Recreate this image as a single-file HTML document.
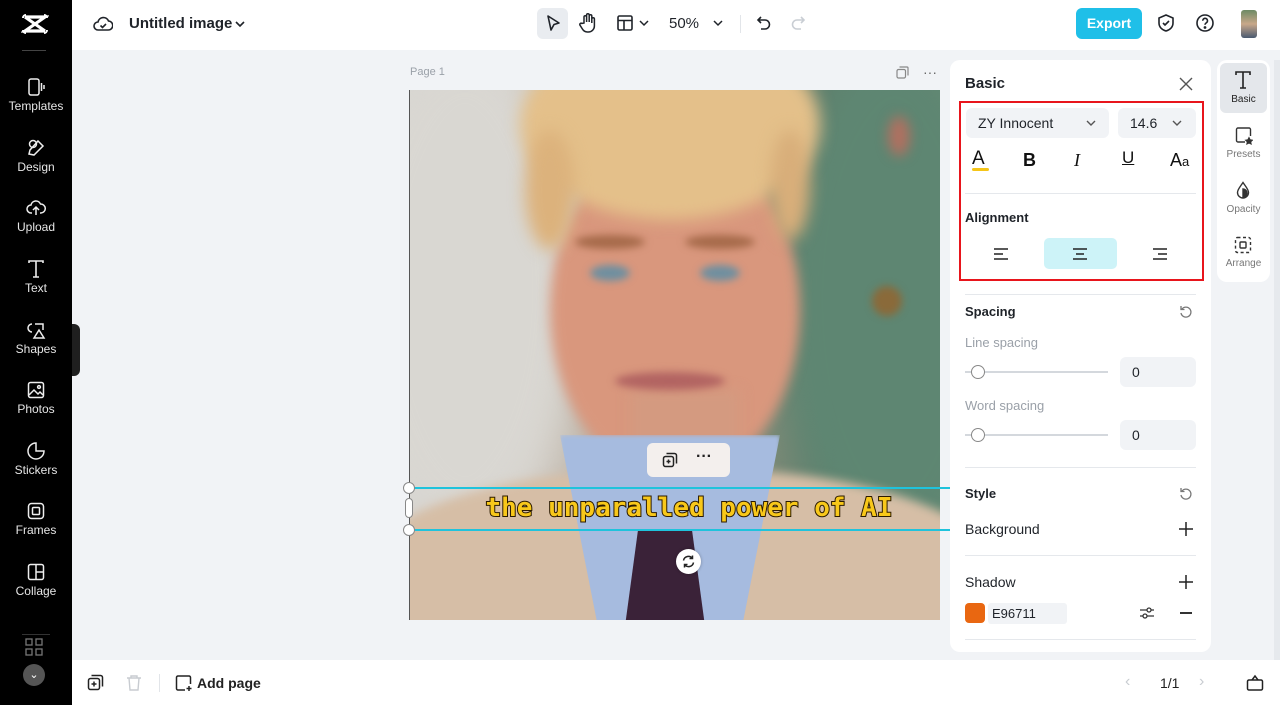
<!DOCTYPE html>
<html><head><meta charset="utf-8"><style>
*{box-sizing:border-box;margin:0;padding:0}
body{width:1280px;height:705px;overflow:hidden;font-family:"Liberation Sans",sans-serif;background:#f1f3f6;position:relative;color:#1f2329}
.abs{position:absolute}
#side{left:0;top:0;width:72px;height:705px;background:#000;color:#ddd}
.si{position:absolute;left:0;width:72px;text-align:center;font-size:12px;color:#e6e6e6}
.si svg{display:block;margin:0 auto 2px}
#top{left:72px;top:0;width:1208px;height:50px;background:#fff}
#bot{left:72px;top:660px;width:1208px;height:45px;background:#fff}
.panel{background:#fff;border-radius:10px}
.lbl{font-size:14px;font-weight:bold;color:#1f2329}
.gray{font-size:13px;color:#9aa0a8}
.inp{background:#f1f3f6;border-radius:6px;font-size:14px;color:#1f2329}
.hr{height:1px;background:#e5e8ec}
.blob{position:absolute;border-radius:50%}
</style></head><body>
<div id="side" class="abs">
 <svg class="abs" style="left:21px;top:13px" width="28" height="22" viewBox="0 0 28 22"><path d="M4 4h20L4 18h20" stroke="#fff" stroke-width="3.2" fill="none"/><path d="M4 4l20 14" stroke="#fff" stroke-width="3.2"/><path d="M2 5a3 3 0 013-3M26 5a3 3 0 00-3-3M2 17a3 3 0 003 3M26 17a3 3 0 01-3 3" stroke="#fff" stroke-width="2" fill="none"/></svg>
 <div class="abs" style="left:22px;top:50px;width:24px;height:1px;background:#444"></div>
 <div class="si" style="top:77px"><svg width="20" height="20" viewBox="0 0 20 20" fill="none" stroke="#eee" stroke-width="1.5"><rect x="3" y="2" width="10" height="16" rx="2"/><path d="M15.5 6v8M18 8v4"/></svg>Templates</div>
 <div class="si" style="top:138px"><svg width="20" height="20" viewBox="0 0 20 20" fill="none" stroke="#eee" stroke-width="1.5"><circle cx="7" cy="6" r="3.5"/><path d="M12 3l5 5-9 9-5-1 1-4z"/></svg>Design</div>
 <div class="si" style="top:198px"><svg width="20" height="20" viewBox="0 0 20 20" fill="none" stroke="#eee" stroke-width="1.5"><path d="M6 15H5a4 4 0 010-8 5 5 0 019.5-1A4 4 0 0115 15h-1M10 17V9M7 12l3-3 3 3"/></svg>Upload</div>
 <div class="si" style="top:259px"><svg width="20" height="20" viewBox="0 0 20 20" fill="none" stroke="#eee" stroke-width="1.6"><path d="M3 4V2h14v2M10 2v16M7 18h6"/></svg>Text</div>
 <div class="si" style="top:320px"><svg width="20" height="20" viewBox="0 0 20 20" fill="none" stroke="#eee" stroke-width="1.5"><path d="M6 12a4 4 0 110-8M9 4h8v6M8 18l5-8 5 8z"/></svg>Shapes</div>
 <div class="si" style="top:380px"><svg width="20" height="20" viewBox="0 0 20 20" fill="none" stroke="#eee" stroke-width="1.5"><rect x="2.5" y="2.5" width="15" height="15" rx="2"/><path d="M3 15l5-5 4 4 2-2 3 3"/><circle cx="13" cy="7" r="1.4"/></svg>Photos</div>
 <div class="si" style="top:441px"><svg width="20" height="20" viewBox="0 0 20 20" fill="none" stroke="#eee" stroke-width="1.5"><path d="M10 2a8 8 0 108 8h-8z"/></svg>Stickers</div>
 <div class="si" style="top:501px"><svg width="20" height="20" viewBox="0 0 20 20" fill="none" stroke="#eee" stroke-width="1.5"><rect x="2.5" y="2.5" width="15" height="15" rx="3"/><rect x="6.5" y="6.5" width="7" height="7" rx="1"/></svg>Frames</div>
 <div class="si" style="top:562px"><svg width="20" height="20" viewBox="0 0 20 20" fill="none" stroke="#eee" stroke-width="1.5"><rect x="2.5" y="2.5" width="15" height="15" rx="2"/><path d="M10 2.5v15M10 10h7.5"/></svg>Collage</div>
 <div class="abs" style="left:22px;top:634px;width:28px;height:1px;background:#333"></div>
 <svg class="abs" style="left:25px;top:638px" width="18" height="18" viewBox="0 0 18 18" fill="none" stroke="#777" stroke-width="1.3"><rect x="1" y="1" width="6" height="6"/><rect x="11" y="1" width="6" height="6"/><rect x="1" y="11" width="6" height="6"/><rect x="11" y="11" width="6" height="6"/></svg>
 <div class="abs" style="left:23px;top:664px;width:22px;height:22px;border-radius:50%;background:#555;color:#fff;font-size:11px;text-align:center;line-height:22px">⌄</div>
</div>
<div class="abs" style="left:72px;top:324px;width:8px;height:52px;background:#1f1f1f;border-radius:0 6px 6px 0"></div>

<div id="top" class="abs">
 <svg class="abs" style="left:21px;top:14px" width="20" height="20" viewBox="0 0 20 20" fill="none" stroke="#1f2329" stroke-width="1.6"><path d="M5 16a4 4 0 010-8 5.5 5.5 0 0110.5-1A4.5 4.5 0 0115 16z"/><path d="M7.5 11.5l2 2 3.5-3.5"/></svg>
 <div class="abs" style="left:57px;top:15px;font-size:15px;font-weight:bold;color:#1f2329">Untitled image</div>
 <svg class="abs" style="left:162px;top:18px" width="12" height="12" viewBox="0 0 12 12"><path d="M2 4l4 4 4-4" stroke="#1f2329" stroke-width="1.6" fill="none"/></svg>
 <div class="abs" style="left:465px;top:8px;width:31px;height:31px;background:#e9ecf0;border-radius:6px"></div>
 <svg class="abs" style="left:471px;top:13px" width="20" height="20" viewBox="0 0 20 20"><path d="M5 3l11 7-5 1.5L8 17z" stroke="#1f2329" stroke-width="1.6" fill="none" stroke-linejoin="round"/></svg>
 <svg class="abs" style="left:506px;top:12px" width="20" height="22" viewBox="0 0 20 22" fill="none" stroke="#1f2329" stroke-width="1.5"><path d="M6 11V5a1.3 1.3 0 012.6 0v5V3a1.3 1.3 0 012.6 0v7V4a1.3 1.3 0 012.6 0v7V7a1.3 1.3 0 012.6 0v7a6 6 0 01-6 6h-1a6 6 0 01-5-3l-2.5-4a1.3 1.3 0 012-1.5z"/></svg>
 <svg class="abs" style="left:544px;top:14px" width="18" height="18" viewBox="0 0 18 18" fill="none" stroke="#1f2329" stroke-width="1.6"><rect x="2" y="2" width="14" height="14" rx="1.5"/><path d="M2 6.5h14M8 6.5V16"/></svg>
 <svg class="abs" style="left:566px;top:18px" width="12" height="10" viewBox="0 0 12 10"><path d="M2 3l4 4 4-4" stroke="#1f2329" stroke-width="1.5" fill="none"/></svg>
 <div class="abs" style="left:597px;top:15px;font-size:15px;color:#1f2329">50%</div>
 <svg class="abs" style="left:640px;top:18px" width="12" height="10" viewBox="0 0 12 10"><path d="M2 3l4 4 4-4" stroke="#1f2329" stroke-width="1.5" fill="none"/></svg>
 <div class="abs" style="left:668px;top:15px;width:1px;height:18px;background:#e2e5e9"></div>
 <svg class="abs" style="left:683px;top:14px" width="18" height="18" viewBox="0 0 18 18" fill="none" stroke="#1f2329" stroke-width="1.6"><path d="M6 3L3 6l3 3M3 6h7a4.5 4.5 0 010 9H6"/></svg>
 <svg class="abs" style="left:717px;top:14px" width="18" height="18" viewBox="0 0 18 18" fill="none" stroke="#c9ced4" stroke-width="1.6"><path d="M12 3l3 3-3 3M15 6H8a4.5 4.5 0 000 9h4"/></svg>
 <div class="abs" style="left:1004px;top:8px;width:66px;height:31px;background:#1fbfe8;border-radius:6px;color:#fff;font-weight:bold;font-size:14px;text-align:center;line-height:31px">Export</div>
 <svg class="abs" style="left:1084px;top:13px" width="20" height="20" viewBox="0 0 20 20" fill="none" stroke="#1f2329" stroke-width="1.6"><path d="M10 2l7 3v5c0 4-3 7-7 8-4-1-7-4-7-8V5z"/><path d="M7 10l2 2 4-4"/></svg>
 <svg class="abs" style="left:1123px;top:13px" width="20" height="20" viewBox="0 0 20 20" fill="none" stroke="#1f2329" stroke-width="1.6"><circle cx="10" cy="10" r="8"/><path d="M7.7 7.7a2.4 2.4 0 114 1.8c-1 .7-1.7 1.2-1.7 2.3"/><circle cx="10" cy="14.5" r=".6" fill="#1f2329"/></svg>
 <div class="abs" style="left:1169px;top:10px;width:16px;height:28px;border-radius:3px;background:linear-gradient(#6d8a64,#c9a88a 50%,#4a5a70)"></div>
</div>

<div class="abs" style="left:410px;top:66px;font-size:11px;color:#9aa0a8">Page 1</div>
<svg class="abs" style="left:896px;top:66px" width="13" height="13" viewBox="0 0 13 13" fill="none" stroke="#888" stroke-width="1.2"><rect x="1" y="3.5" width="8.5" height="8.5" rx="1.5"/><path d="M3.5 1h7.5a1 1 0 011 1v7.5"/></svg>
<div class="abs" style="left:923px;top:64px;font-size:14px;color:#666">···</div>

<!-- photo -->
<div class="abs" style="left:410px;top:90px;width:530px;height:530px;overflow:hidden;background:linear-gradient(90deg,#d8d6d2 0%,#cfc9c1 22%,#a79a88 50%,#5f7f6c 80%,#6b8d77 100%)">
 <div class="blob" style="left:-60px;top:-40px;width:230px;height:480px;background:#d9d7d2;filter:blur(20px)"></div>
 <div class="blob" style="left:370px;top:-40px;width:230px;height:500px;background:#5e8672;filter:blur(18px)"></div>
 <div class="blob" style="left:462px;top:196px;width:30px;height:30px;background:#8a6a3a;filter:blur(4px)"></div>
 <div class="blob" style="left:478px;top:26px;width:22px;height:40px;background:#b07060;filter:blur(6px)"></div>
 <div class="blob" style="left:140px;top:50px;width:250px;height:340px;background:#d9977d;filter:blur(6px)"></div>
 <div class="abs" style="left:220px;top:300px;width:110px;height:90px;background:#d49a80;filter:blur(6px)"></div>
 <div class="blob" style="left:110px;top:-60px;width:300px;height:190px;background:#e4c08a;filter:blur(8px)"></div>
 <div class="blob" style="left:115px;top:40px;width:50px;height:120px;background:#dcb27c;filter:blur(8px)"></div>
 <div class="blob" style="left:360px;top:40px;width:40px;height:110px;background:#d8ae7a;filter:blur(8px)"></div>
 <div class="blob" style="left:165px;top:145px;width:70px;height:14px;background:#a66a4a;filter:blur(4px)"></div>
 <div class="blob" style="left:275px;top:145px;width:70px;height:14px;background:#a66a4a;filter:blur(4px)"></div>
 <div class="blob" style="left:180px;top:175px;width:40px;height:16px;background:#6e8fa0;filter:blur(4px)"></div>
 <div class="blob" style="left:290px;top:175px;width:40px;height:16px;background:#6e8fa0;filter:blur(4px)"></div>
 <div class="blob" style="left:205px;top:282px;width:110px;height:18px;background:#b26462;filter:blur(4px)"></div>
 <div class="abs" style="left:-60px;top:380px;width:660px;height:260px;background:#d6bea6;border-radius:45% 45% 0 0;filter:blur(5px)"></div>
 <div class="abs" style="left:150px;top:345px;width:220px;height:200px;background:#a6bbdf;clip-path:polygon(0 0,100% 0,82% 100%,18% 100%);filter:blur(2px)"></div>
 <div class="abs" style="left:210px;top:440px;width:90px;height:100px;background:#3a2238;clip-path:polygon(20% 0,80% 0,95% 100%,5% 100%)"></div>
</div>
<div class="abs" style="left:409px;top:90px;width:1px;height:530px;background:#555"></div>
<!-- selection -->
<div class="abs" style="left:410px;top:487px;width:540px;height:2px;background:#1fc3dc"></div>
<div class="abs" style="left:410px;top:529px;width:540px;height:2px;background:#1fc3dc"></div>
<div class="abs" style="left:403px;top:482px;width:12px;height:12px;border-radius:50%;background:#fff;border:1px solid #888"></div>
<div class="abs" style="left:403px;top:524px;width:12px;height:12px;border-radius:50%;background:#fff;border:1px solid #888"></div>
<div class="abs" style="left:405px;top:498px;width:8px;height:20px;border-radius:4px;background:#fff;border:1px solid #888"></div>
<div class="abs" style="left:410px;top:490px;width:558px;text-align:center;font-family:'DejaVu Sans Mono',monospace;font-weight:bold;font-size:26px;letter-spacing:0px;color:#f8c81a;-webkit-text-stroke:2px #2a1a00;paint-order:stroke fill;line-height:36px">the unparalled power of AI</div>
<div class="abs" style="left:647px;top:443px;width:83px;height:34px;background:#f3efed;border-radius:6px"></div>
<svg class="abs" style="left:662px;top:452px" width="16" height="16" viewBox="0 0 16 16" fill="none" stroke="#222" stroke-width="1.5"><rect x="1.5" y="4.5" width="10" height="10" rx="2"/><path d="M4.5 1.5h8a2 2 0 012 2v8M6.5 7.5v4M4.5 9.5h4"/></svg>
<div class="abs" style="left:696px;top:448px;font-size:16px;font-weight:bold;color:#222">···</div>
<div class="abs" style="left:676px;top:549px;width:25px;height:25px;border-radius:50%;background:#fff;box-shadow:0 0 3px rgba(0,0,0,.3)"></div>
<svg class="abs" style="left:681px;top:554px" width="15" height="15" viewBox="0 0 15 15" fill="none" stroke="#222" stroke-width="1.5"><path d="M2.5 6.5a5 5 0 019-2M12.5 8.5a5 5 0 01-9 2M11.5 1.5v3h-3M3.5 13.5v-3h3"/></svg>

<!-- panel -->
<div class="abs panel" style="left:950px;top:60px;width:261px;height:592px;overflow:hidden">
 <div class="abs lbl" style="left:15px;top:15px;font-size:15px">Basic</div>
 <svg class="abs" style="left:229px;top:17px" width="14" height="14" viewBox="0 0 14 14"><path d="M1 1l12 12M13 1L1 13" stroke="#555" stroke-width="1.4"/></svg>
 <div class="abs" style="left:9px;top:41px;width:245px;height:180px;border:2px solid #e8151c"></div>
 <div class="abs inp" style="left:16px;top:48px;width:143px;height:30px;line-height:30px;padding-left:12px">ZY Innocent</div>
 <svg class="abs" style="left:135px;top:58px" width="12" height="10" viewBox="0 0 12 10"><path d="M2 3l4 4 4-4" stroke="#555" stroke-width="1.4" fill="none"/></svg>
 <div class="abs inp" style="left:168px;top:48px;width:78px;height:30px;line-height:30px;padding-left:12px">14.6</div>
 <svg class="abs" style="left:221px;top:58px" width="12" height="10" viewBox="0 0 12 10"><path d="M2 3l4 4 4-4" stroke="#555" stroke-width="1.4" fill="none"/></svg>
 <div class="abs" style="left:22px;top:88px;font-size:19px;color:#111">A</div>
 <div class="abs" style="left:22px;top:108px;width:17px;height:3px;background:#f5c518;border-radius:2px"></div>
 <div class="abs" style="left:73px;top:90px;font-size:18px;font-weight:bold;color:#111">B</div>
 <div class="abs" style="left:124px;top:90px;font-size:18px;font-style:italic;font-family:'Liberation Serif',serif;color:#111">I</div>
 <div class="abs" style="left:172px;top:88px;font-size:17px;text-decoration:underline;color:#111">U</div>
 <div class="abs" style="left:220px;top:90px;font-size:18px;color:#111">A<span style="font-size:13px">a</span></div>
 <div class="abs hr" style="left:15px;top:133px;width:231px"></div>
 <div class="abs" style="left:15px;top:150px;font-size:13px;font-weight:bold;color:#1f2329">Alignment</div>
 <div class="abs" style="left:94px;top:178px;width:73px;height:31px;background:#cdf3f8;border-radius:5px"></div>
 <svg class="abs" style="left:43px;top:187px" width="16" height="14" viewBox="0 0 16 14"><path d="M1 2h14M1 7h9M1 12h14" stroke="#222" stroke-width="1.4"/></svg>
 <svg class="abs" style="left:122px;top:187px" width="16" height="14" viewBox="0 0 16 14"><path d="M1 2h14M4 7h8M1 12h14" stroke="#222" stroke-width="1.4"/></svg>
 <svg class="abs" style="left:202px;top:187px" width="16" height="14" viewBox="0 0 16 14"><path d="M1 2h14M6 7h9M1 12h14" stroke="#222" stroke-width="1.4"/></svg>
 <div class="abs hr" style="left:15px;top:234px;width:231px"></div>
 <div class="abs" style="left:15px;top:244px;font-size:13px;font-weight:bold">Spacing</div>
 <svg class="abs" style="left:229px;top:245px" width="14" height="14" viewBox="0 0 14 14" fill="none" stroke="#777" stroke-width="1.3"><path d="M3 4a5 5 0 11-1 4M2 1v3.5h3.5"/></svg>
 <div class="abs gray" style="left:15px;top:275px">Line spacing</div>
 <div class="abs" style="left:15px;top:311px;width:143px;height:2px;background:#d4d8dd"></div>
 <div class="abs" style="left:21px;top:305px;width:14px;height:14px;border-radius:50%;background:#fff;border:1px solid #888"></div>
 <div class="abs inp" style="left:170px;top:297px;width:76px;height:30px;line-height:30px;padding-left:12px">0</div>
 <div class="abs gray" style="left:15px;top:338px">Word spacing</div>
 <div class="abs" style="left:15px;top:374px;width:143px;height:2px;background:#d4d8dd"></div>
 <div class="abs" style="left:21px;top:368px;width:14px;height:14px;border-radius:50%;background:#fff;border:1px solid #888"></div>
 <div class="abs inp" style="left:170px;top:360px;width:76px;height:30px;line-height:30px;padding-left:12px">0</div>
 <div class="abs hr" style="left:15px;top:407px;width:231px"></div>
 <div class="abs" style="left:15px;top:426px;font-size:13px;font-weight:bold">Style</div>
 <svg class="abs" style="left:229px;top:427px" width="14" height="14" viewBox="0 0 14 14" fill="none" stroke="#777" stroke-width="1.3"><path d="M3 4a5 5 0 11-1 4M2 1v3.5h3.5"/></svg>
 <div class="abs" style="left:15px;top:461px;font-size:14px">Background</div>
 <svg class="abs" style="left:229px;top:462px" width="14" height="14" viewBox="0 0 14 14"><path d="M7 0v14M0 7h14" stroke="#222" stroke-width="1.5"/></svg>
 <div class="abs hr" style="left:15px;top:495px;width:231px"></div>
 <div class="abs" style="left:15px;top:514px;font-size:14px">Shadow</div>
 <svg class="abs" style="left:229px;top:515px" width="14" height="14" viewBox="0 0 14 14"><path d="M7 0v14M0 7h14" stroke="#222" stroke-width="1.5"/></svg>
 <div class="abs" style="left:15px;top:543px;width:20px;height:20px;border-radius:4px;background:#e96711"></div>
 <div class="abs inp" style="left:38px;top:543px;width:79px;height:21px;line-height:21px;padding-left:4px;font-size:13px;border-radius:3px">E96711</div>
 <svg class="abs" style="left:189px;top:546px" width="16" height="14" viewBox="0 0 16 14" fill="none" stroke="#333" stroke-width="1.3"><path d="M1 4h14M1 10h14"/><circle cx="10" cy="4" r="2" fill="#fff"/><circle cx="6" cy="10" r="2" fill="#fff"/></svg>
 <div class="abs" style="left:230px;top:552px;width:12px;height:1.5px;background:#333"></div>
 <div class="abs hr" style="left:15px;top:579px;width:231px"></div>
</div>

<!-- right tab bar -->
<div class="abs panel" style="left:1217px;top:60px;width:53px;height:222px">
 <div class="abs" style="left:3px;top:3px;width:47px;height:50px;background:#e4e7eb;border-radius:6px"></div>
 <svg class="abs" style="left:16px;top:10px" width="20" height="20" viewBox="0 0 20 20" fill="none" stroke="#222" stroke-width="1.6"><path d="M3 5V2h14v3M10 2v16M7 18h6"/></svg>
 <div class="abs" style="left:0;top:34px;width:53px;text-align:center;font-size:10px;color:#222">Basic</div>
 <svg class="abs" style="left:18px;top:67px" width="18" height="18" viewBox="0 0 18 18" fill="none" stroke="#333" stroke-width="1.4"><path d="M10 15H3a1.5 1.5 0 01-1.5-1.5v-11A1.5 1.5 0 013 1h11a1.5 1.5 0 011.5 1.5V9"/><path d="M14 11l1 2 2 .3-1.5 1.4.4 2-1.9-1-1.9 1 .4-2L11 13.3l2-.3z" fill="#333"/></svg>
 <div class="abs" style="left:0;top:89px;width:53px;text-align:center;font-size:10px;color:#777">Presets</div>
 <svg class="abs" style="left:18px;top:121px" width="16" height="18" viewBox="0 0 16 18" fill="none" stroke="#333" stroke-width="1.4"><path d="M8 1.5C5 6 2.5 8.5 2.5 11.5a5.5 5.5 0 0011 0C13.5 8.5 11 6 8 1.5z"/><path d="M8 16a4 4 0 000-8z" fill="#333"/></svg>
 <div class="abs" style="left:0;top:144px;width:53px;text-align:center;font-size:10px;color:#777">Opacity</div>
 <svg class="abs" style="left:17px;top:176px" width="18" height="18" viewBox="0 0 18 18" fill="none" stroke="#333" stroke-width="1.4"><rect x="1.5" y="1.5" width="15" height="15" rx="2" stroke-dasharray="3 2.5"/><rect x="6" y="6" width="6" height="6" rx="1"/></svg>
 <div class="abs" style="left:0;top:198px;width:53px;text-align:center;font-size:10px;color:#777">Arrange</div>
</div>
<div class="abs" style="left:1274px;top:60px;width:6px;height:600px;background:#e6e9ed"></div>

<div id="bot" class="abs">
 <svg class="abs" style="left:15px;top:14px" width="17" height="17" viewBox="0 0 17 17" fill="none" stroke="#222" stroke-width="1.5"><rect x="1.5" y="4.5" width="11" height="11" rx="2"/><path d="M4.5 1.5h9a2 2 0 012 2v9M7 7.5v5M4.5 10h5"/></svg>
 <svg class="abs" style="left:54px;top:14px" width="16" height="17" viewBox="0 0 16 17" fill="none" stroke="#c8ccd1" stroke-width="1.4"><path d="M1 4h14M5 4V2h6v2M3 4l1 12h8l1-12"/></svg>
 <div class="abs" style="left:87px;top:14px;width:1px;height:18px;background:#e2e5e9"></div>
 <svg class="abs" style="left:103px;top:14px" width="18" height="18" viewBox="0 0 18 18" fill="none" stroke="#222" stroke-width="1.5"><path d="M10 16H3a1.5 1.5 0 01-1.5-1.5v-11A1.5 1.5 0 013 2h11a1.5 1.5 0 011.5 1.5V10M14 12v5M11.5 14.5h5"/></svg>
 <div class="abs" style="left:125px;top:15px;font-size:14px;font-weight:bold;color:#222">Add page</div>
 <div class="abs" style="left:1053px;top:13px;font-size:16px;color:#c8ccd1">‹</div>
 <div class="abs" style="left:1088px;top:15px;font-size:14px;color:#222">1/1</div>
 <div class="abs" style="left:1127px;top:13px;font-size:16px;color:#c8ccd1">›</div>
 <svg class="abs" style="left:1174px;top:14px" width="18" height="18" viewBox="0 0 18 18" fill="none" stroke="#222" stroke-width="1.5"><rect x="1.5" y="6" width="15" height="10" rx="1.5"/><path d="M6 6l3-4 3 4"/></svg>
</div>
</body></html>
